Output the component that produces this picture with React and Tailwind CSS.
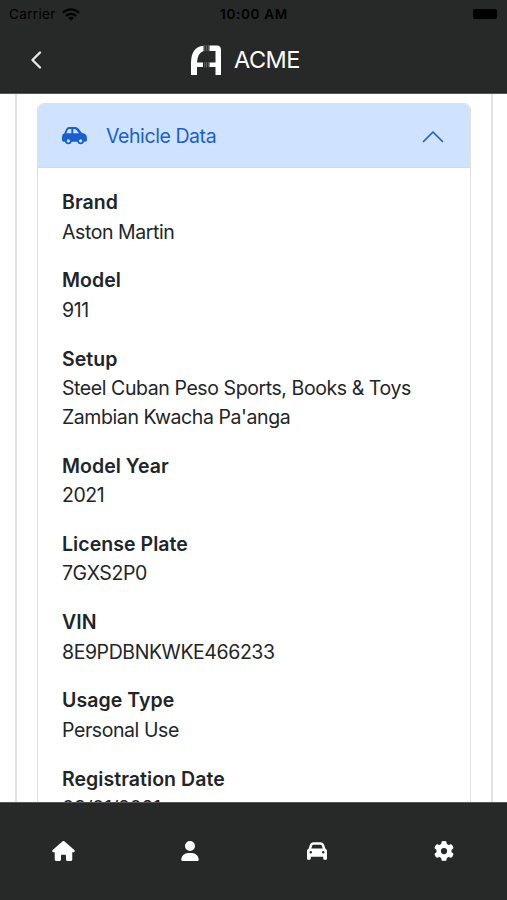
import { FaHouse, FaUser, FaCar, FaGear } from "react-icons/fa6";

const FIELDS = [
  { label: "Brand", value: "Aston Martin" },
  { label: "Model", value: "911" },
  { label: "Setup", value: "Steel Cuban Peso Sports, Books & Toys Zambian Kwacha Pa'anga" },
  { label: "Model Year", value: "2021" },
  { label: "License Plate", value: "7GXS2P0" },
  { label: "VIN", value: "8E9PDBNKWKE466233" },
  { label: "Usage Type", value: "Personal Use" },
  { label: "Registration Date", value: "03/01/2021" },
];

const TABS = [
  { name: "Home", Icon: FaHouse, size: "w-[23px] h-[20px] ml-px" },
  { name: "Profile", Icon: FaUser, size: "size-5" },
  { name: "Vehicles", Icon: FaCar, size: "size-5" },
  { name: "Settings", Icon: FaGear, size: "size-5" },
];

const Wifi = () => (
  <svg viewBox="0 0 18 13" className="w-[18px] h-[13px]" aria-hidden="true">
    <g fill="none" stroke="currentColor" strokeWidth="2.3">
      <path d="M1 4.7 C5.6 .2 12.4 .2 17 4.7" />
      <path d="M4 8 C6.9 5.2 11.1 5.2 14 8" />
    </g>
    <path d="M9 12.6 L6.2 9.9 C7.8 8.5 10.2 8.5 11.8 9.9 Z" fill="currentColor" />
  </svg>
);

/* Brand mark: two arched halves joined by hairline bars. */
const Logo = () => (
  <svg viewBox="0 0 30 30" className="w-[30px] h-[30px]" aria-hidden="true">
    <path d="M0 30 V18 Q0 2 12.5 .7 V6 Q6.5 8 6 17.5 H12 V22 H6 V30 Z" fill="#fff" />
    <path d="M18.5 .5 H26 Q30 .5 30 5 V30 H24.5 V22 H18.5 V17.5 H24.5 V6 H18.5 Z" fill="#fff" />
    <path d="M13.7 0 V6.3 M15.5 0 V6.3 M17.3 0 V6.3 M13.7 17 V22.5 M15.5 17 V22.5 M17.3 17 V22.5" stroke="#777978" strokeWidth=".7" />
  </svg>
);

const CarSide = () => (
  <svg viewBox="0 0 75 52" className="w-[25px] h-[17.3px]" aria-hidden="true">
    <path
      fill="currentColor"
      fillRule="evenodd"
      d="M22 0 H40 Q46 0 50 5 L60 18 Q75 19 75 33 V39 Q75 44 70 44 H5 Q0 44 0 39 V29 Q0 21 7 19 L12 7 Q15 0 22 0 Z M21 6 Q18 6 17 9 L13 19 H28 V6 Z M34 6 V19 H51 L43 9 Q41 6 37 6 Z"
    />
    <g fill="#cfe2ff" stroke="currentColor" strokeWidth="5">
      <circle cx="19" cy="42" r="7.3" />
      <circle cx="56" cy="42" r="7.3" />
    </g>
  </svg>
);

const StatusBar = () => (
  <div className="grid grid-cols-3 items-center h-[28px] pl-[9px] pr-[10px] text-black text-[13.5px]">
    <span className="flex items-center gap-[6px] tracking-[0.35px]">
      Carrier
      <Wifi />
    </span>
    <span className="text-center font-semibold whitespace-nowrap tracking-[0.7px] pl-[2px]">10:00 AM</span>
    <span className="justify-self-end w-[24px] h-[10px] rounded-[2px] bg-black" />
  </div>
);

const Header = () => (
  <header className="shrink-0 h-[94px] bg-[#272928] border-b border-[#555]">
    <StatusBar />
    <div className="grid grid-cols-3 items-center h-[64px]">
      <button type="button" aria-label="Back" className="justify-self-start pl-[30px]">
        <svg viewBox="0 0 12 18" className="w-3 h-[18px]" aria-hidden="true">
          <path d="M10 1.5 L2.5 9 L10 16.5" fill="none" stroke="#e9e9e9" strokeWidth="2.3" strokeLinecap="round" strokeLinejoin="round" />
        </svg>
      </button>
      <div className="flex items-center gap-[13px] justify-self-center -ml-[16px]">
        <Logo />
        <span className="text-white text-[23.5px] tracking-[-0.5px]">ACME</span>
      </div>
    </div>
  </header>
);

const Field = ({ label, value }) => (
  <div className="mb-[19.5px]">
    <dt className="font-semibold tracking-[0.05px]">{label}</dt>
    <dd className="tracking-[-0.42px]">{value}</dd>
  </div>
);

const App = () => (
  <div className="flex flex-col h-[900px] w-[507px] overflow-hidden bg-white font-['Inter','Liberation_Sans',sans-serif]">
    <Header />

    <main className="flex-1 min-h-0 overflow-hidden ml-[15px] mr-[14px] px-[20px] pt-[9px] border-x-2 border-[#e2e2e2]">
      <section className="rounded-t-[7px] border border-[#dedfe1] overflow-hidden">
        <button type="button" aria-expanded="true" className="flex items-center w-full h-[64px] pl-[24px] pr-[26px] pt-px bg-[#cfe2ff] border-b border-[#d5dbe4] text-[#1a5fcb] text-left">
          <CarSide />
          <span className="flex-1 ml-[19px] pt-px text-[19.5px] tracking-[-0.42px]">Vehicle Data</span>
          <svg viewBox="0 0 22 13" className="w-[22px] h-[13px]" aria-hidden="true">
            <path d="M1.5 11.5 L11 2 L20.5 11.5" fill="none" stroke="currentColor" strokeWidth="1.6" strokeLinecap="round" strokeLinejoin="round" />
          </svg>
        </button>
        <dl className="pt-[20.2px] px-[24px] text-[19.5px] leading-[29.33px] text-[#212529]">
          {FIELDS.map((field) => (
            <Field key={field.label} {...field} />
          ))}
        </dl>
      </section>
    </main>

    <nav className="shrink-0 grid grid-cols-4 h-[98px] pb-px bg-[#272928] border-t border-[#555] text-white">
      {TABS.map(({ name, Icon, size }) => (
        <button key={name} type="button" aria-label={name} className="flex items-center justify-center">
          <Icon className={size} />
        </button>
      ))}
    </nav>
  </div>
);

export default App;
